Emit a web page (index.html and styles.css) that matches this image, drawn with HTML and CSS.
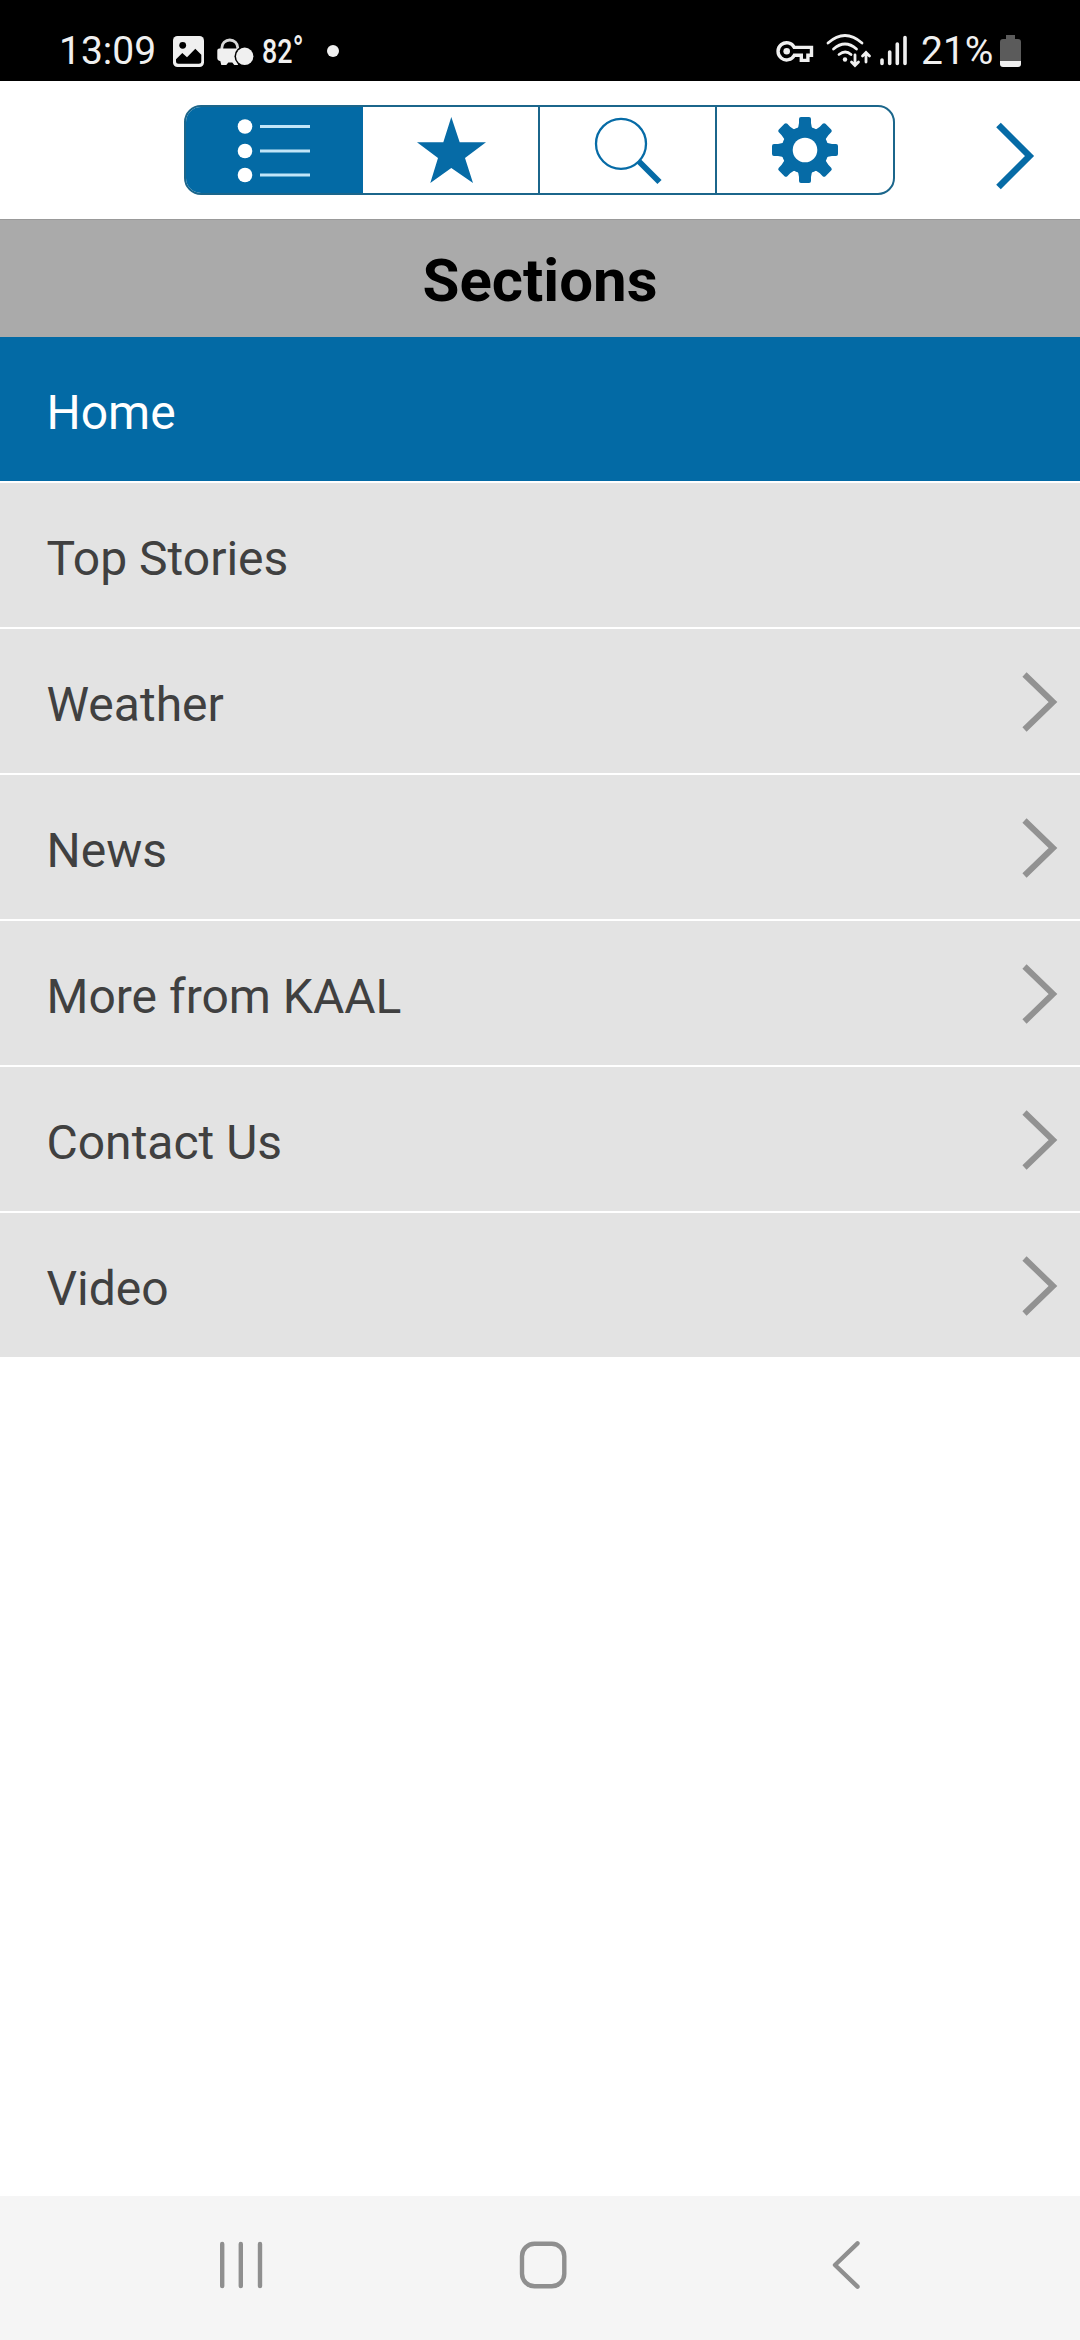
FILE: index.html
```html
<!DOCTYPE html>
<html lang="en">
<head>
<meta charset="utf-8">
<title>Sections</title>
<link rel="stylesheet" href="styles.css">
</head>
<body>
<div class="screen">
  <header class="status">
    <div class="status-left">
      <span class="clock">13:09</span>
      <svg class="i-photo" viewBox="171 30 36 42"><rect x="173" y="36" width="31" height="31" rx="4.5" fill="#f0f0f0"/><circle cx="182.7" cy="45.3" r="3.4"/><path d="M176 59.3l6.3-6.4 4.7 4.3 8.3-8.4 6 6v6.5q0 2.5-2.5 2.5h-20.3q-2.5 0-2.5-2.5z"/></svg>
      <svg class="i-traffic" viewBox="214 30 42 42"><path d="M221.8 50v-2a8 8 0 0 1 16 0v2" fill="none" stroke="#d8d8d8" stroke-width="2.8"/><path d="M217.300 50.500q0-2 2-2h18q2 0 2 2v11.500l-1.600 3h-3.400l-2-2.600h-4l-2 2.600h-5l-1-4q-3-.5-3-3z" fill="#f0f0f0"/><circle cx="244.7" cy="56.3" r="10.2"/><circle cx="244.7" cy="56.3" r="8.7" fill="#f0f0f0"/></svg>
      <span class="temp">82<span class="deg">°</span></span>
      <span class="dot"></span>
    </div>
    <div class="status-right">
      <svg class="i-key" viewBox="775 30 40 42"><path d="M794.300 47.400h17.200v7.800h-3.600v5.200h-6.600v-5.200h-7a8.600 8.600 0 1 1 0-7.800z" fill="none" stroke="#f0f0f0" stroke-width="3.400"/><circle cx="786.700" cy="51.300" r="3.300" fill="#f0f0f0"/></svg>
      <svg class="i-wifi" viewBox="824 30 48 42" fill="none" stroke="#f0f0f0" stroke-width="2.8" stroke-linecap="round"><path d="M828 43q17-15 34 0M833.500 49q11.500-10 23 0M839 54.500q6.500-5 12 0"/><circle cx="845" cy="59.500" r="2.200" fill="#f0f0f0" stroke="none"/><path d="M855 55v10M851.500 62l3.500 3.500 3.500-3.500M866 62V52.500M862.500 56l3.500-3.500 3.500 3.500"/></svg>
      <svg class="i-signal" viewBox="878 30 32 42" stroke="#f0f0f0" stroke-width="3.600" stroke-linecap="round"><path d="M882 60v3.500M889.700 52v11.500M897.300 44v19.500M905 37.500v26"/></svg>
      <span class="level">21%</span>
      <svg class="i-battery" viewBox="998 30 26 42"><path d="M1006 35h9v4h3q3 0 3 3v19h-21V42q0-3 3-3h3z" fill="#5b5b5b"/><path d="M1000 61h21v3q0 3-3 3h-15q-3 0-3-3z" fill="#f0f0f0"/></svg>
    </div>
  </header>
  <div class="toolbar">
    <div class="tabs">
      <div class="tab tab-active"><svg width="76" height="66" viewBox="0 0 76 66"><g fill="#fff"><circle cx="9" cy="9.500" r="7.300"/><circle cx="9" cy="34" r="7.300"/><circle cx="9" cy="58" r="7.300"/></g><path d="M24 9.500h50M24 34h50M24 58h50" stroke="#c2e5f8" stroke-width="3.200"/></svg></div>
      <div class="tab"><svg width="70" height="68" viewBox="416 116 70 68"><path d="M451.300 117l8.400 25.300h26.300l-21 15.700 8 25-21.700-15-21 15 7.700-25-21-15.700h26.300z" fill="#066ba6"/></svg></div>
      <div class="tab"><svg width="70" height="68" viewBox="592 115 70 68" fill="none" stroke="#066ba6"><circle cx="620" cy="142.800" r="25" stroke-width="2.300"/><path d="M638 160.500l20.500 20.500" stroke-width="5.800"/></svg></div>
      <div class="tab"><svg width="68" height="68" viewBox="-34 -34 68 68"><g fill="#066ba6"><circle r="23.500"/><g id="teeth"><path id="tooth" d="M-9-19Q-6-23-6-27V-31Q-6-33-4-33H4Q6-33 6-31V-27Q6-23 9-19z"/><use href="#tooth" transform="rotate(90)"/><use href="#tooth" transform="rotate(180)"/><use href="#tooth" transform="rotate(270)"/></g><use href="#teeth" transform="rotate(45)"/></g><circle r="12.300" fill="#fff"/></svg></div>
    </div>
    <svg class="next" width="40" height="68" viewBox="995 122 40 68"><path d="M998.500 125l31 31-31 31" fill="none" stroke="#066ba6" stroke-width="6.500"/></svg>
  </div>
  <h1 class="title">Sections</h1>
  <ul class="list">
    <li class="row row-active">Home</li>
    <li class="row">Top Stories</li>
    <li class="row">Weather<svg class="chev" viewBox="0 0 36 60"><path d="M2.500 2.500l28.500 27.500-28.500 27.500"/></svg></li>
    <li class="row">News<svg class="chev" viewBox="0 0 36 60"><path d="M2.500 2.500l28.500 27.500-28.500 27.500"/></svg></li>
    <li class="row">More from KAAL<svg class="chev" viewBox="0 0 36 60"><path d="M2.500 2.500l28.500 27.500-28.500 27.500"/></svg></li>
    <li class="row">Contact Us<svg class="chev" viewBox="0 0 36 60"><path d="M2.500 2.500l28.500 27.500-28.500 27.500"/></svg></li>
    <li class="row">Video<svg class="chev" viewBox="0 0 36 60"><path d="M2.500 2.500l28.500 27.500-28.500 27.500"/></svg></li>
  </ul>
  <nav class="navbar">
    <svg width="48" height="50" viewBox="217 2240 48 50"><path d="M222.200 2244v42M240.800 2244v42M260 2244v42"/></svg>
    <svg width="50" height="50" viewBox="523 2240 50 50"><rect x="522" y="2243.700" width="42.300" height="42.600" rx="12.500"/></svg>
    <svg width="32" height="52" viewBox="831 2239 32 52"><path d="M857.500 2243.300l-22.500 21.700 22.500 21.700"/></svg>
  </nav>
</div>
</body>
</html>
```
FILE: styles.css
```css
* { box-sizing: border-box; }
body { margin: 0; background: #fff; font-family: Roboto, "Liberation Sans", sans-serif; }
svg { display: block; flex: none; overflow: visible; }
.screen { width: 1080px; height: 2340px; display: flex; flex-direction: column; background: #fff; }

.status { height: 81px; flex: none; background: #000; color: #f0f0f0; display: flex; justify-content: space-between; padding: 30px 56px 0 59px; }
.status-left, .status-right { display: flex; height: 42px; align-items: center; white-space: nowrap; }
.clock { width: 112px; font-size: 39px; line-height: 44px; }
.i-photo { width: 36px; height: 42px; }
.i-traffic { width: 42px; height: 42px; margin-left: 7px; }
.temp { width: 66px; margin-left: 6px; font-size: 34px; line-height: 42px; font-weight: 500; transform: scaleX(.79); transform-origin: 0 50%; }
.deg { font-size: 38px; font-weight: 400; line-height: 1; }
.dot { width: 12px; height: 12px; margin-left: -1px; border-radius: 50%; background: #f0f0f0; }
.i-key { width: 40px; height: 42px; }
.i-wifi { width: 48px; height: 42px; margin-left: 9px; }
.i-signal { width: 32px; height: 42px; margin-left: 6px; }
.level { width: 77px; margin-left: 11px; font-size: 39px; line-height: 44px; }
.i-battery { width: 26px; height: 42px; }

.toolbar { height: 138px; flex: none; display: flex; align-items: flex-start; padding: 24px 45px 0 184px; }
.tabs { width: 711px; height: 90px; display: grid; grid-template-columns: 177px 177px 177px 1fr; border: 2px solid #1b668b; border-radius: 17px; overflow: hidden; }
.tab { display: flex; align-items: center; justify-content: center; border-right: 2px solid #1b668b; }
.tab:last-child { border-right: 0; }
.tab-active { background: #036aa5; border-color: #036aa5; }
.next { margin: 17px 0 0 auto; }

.title { margin: 0; height: 118px; flex: none; background: #aaa; border-top: 1px solid #999; color: #000; font-size: 60px; font-weight: 700; line-height: 70px; padding-top: 26px; text-align: center; }

.list { margin: 0; padding: 0; list-style: none; display: flex; flex-direction: column; gap: 2px; }
.row { height: 144px; padding: 7px 22px 0 46.500px; display: flex; align-items: center; justify-content: space-between; background: #e3e3e3; color: #404040; font-size: 48px; }
.row-active { background: #036aa5; color: #fff; }
.chev { width: 36px; height: 60px; margin-top: -6px; fill: none; stroke: #929292; stroke-width: 6px; }

.navbar { margin-top: auto; height: 144px; flex: none; display: flex; align-items: center; justify-content: space-between; padding: 0 217px 6px; background: #f5f5f5; }
.navbar svg { fill: none; stroke: #8f8f8f; stroke-width: 4.4px; stroke-linecap: round; stroke-linejoin: round; }
```
